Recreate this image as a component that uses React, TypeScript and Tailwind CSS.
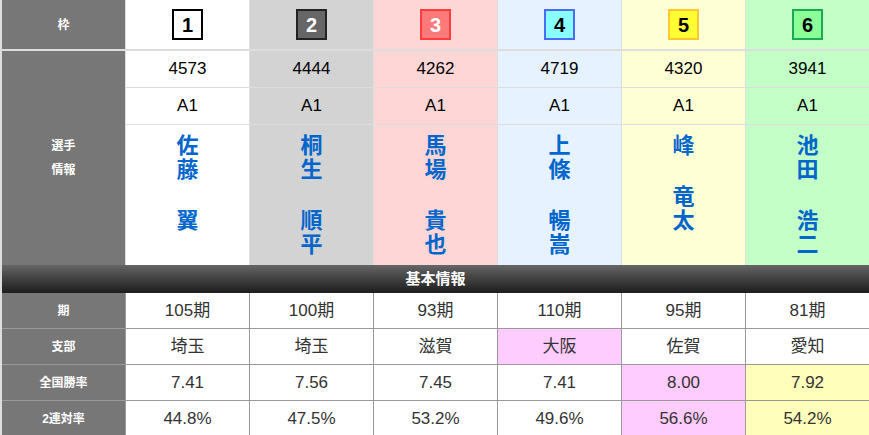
const font = "[font-family:'Liberation_Sans','Noto_Sans_CJK_JP',sans-serif]";

const racers = [
  {
    frame: "1",
    col: "bg-white",
    box: "bg-white border-black text-black",
    no: "4573",
    cls: "A1",
    name: ["佐", "藤", "　", "翼"],
    term: "105期",
    branch: "埼玉",
    rate: "7.41",
    rate2: "44.8%",
  },
  {
    frame: "2",
    col: "bg-[#d3d3d3]",
    box: "bg-[#666666] border-[#222222] text-white",
    no: "4444",
    cls: "A1",
    name: ["桐", "生", "　", "順", "平"],
    term: "100期",
    branch: "埼玉",
    rate: "7.56",
    rate2: "47.5%",
  },
  {
    frame: "3",
    col: "bg-[#ffd6d6]",
    box: "bg-[#ff7b7b] border-[#ff3b3b] text-white",
    no: "4262",
    cls: "A1",
    name: ["馬", "場", "　", "貴", "也"],
    term: "93期",
    branch: "滋賀",
    rate: "7.45",
    rate2: "53.2%",
  },
  {
    frame: "4",
    col: "bg-[#e6f2ff]",
    box: "bg-[#8affff] border-[#4a6bff] text-black",
    no: "4719",
    cls: "A1",
    name: ["上", "條", "　", "暢", "嵩"],
    term: "110期",
    branch: "大阪",
    branchHi: "bg-[#ffccff]",
    rate: "7.41",
    rate2: "49.6%",
  },
  {
    frame: "5",
    col: "bg-[#ffffd6]",
    box: "bg-[#ffff33] border-[#ffc830] text-black",
    no: "4320",
    cls: "A1",
    name: ["峰", "　", "竜", "太"],
    term: "95期",
    branch: "佐賀",
    rate: "8.00",
    rate2: "56.6%",
    rateHi: "bg-[#ffccff]",
  },
  {
    frame: "6",
    col: "bg-[#c3ffc6]",
    box: "bg-[#8cff99] border-[#1aaa55] text-black",
    no: "3941",
    cls: "A1",
    name: ["池", "田", "　", "浩", "二"],
    term: "81期",
    branch: "愛知",
    rate: "7.92",
    rate2: "54.2%",
    rateHi: "bg-[#ffffbb]",
  },
];

type Racer = (typeof racers)[number] & { branchHi?: string; rateHi?: string };

const label = "flex items-center justify-center bg-[#777777] text-[12px] font-bold text-white";
const cell = "flex items-center justify-center text-[17px] text-[#333333]";

export default function App() {
  const list = racers as Racer[];

  return (
    <div className={`w-[869px] h-[435px] overflow-hidden bg-[#dddddd] pl-[2px] ${font}`}>
      {/* TOP: racer info */}
      <div className="grid grid-cols-[123px_repeat(6,minmax(0,1fr))] grid-rows-[50px_36px_36px_140px] gap-x-px gap-y-px">
        <div className={`${label} mb-px`}>枠</div>
        {list.map((r) => (
          <div key={r.frame} className={`${r.col} mb-px flex items-center justify-center`}>
            <span
              className={`flex h-[31px] w-[31px] items-center justify-center border-2 text-[20px] font-bold leading-none ${r.box}`}
            >
              {r.frame}
            </span>
          </div>
        ))}

        <div className={`${label} row-span-3 flex-col leading-[24px]`}>
          <span>選手</span>
          <span>情報</span>
        </div>
        {list.map((r) => (
          <div key={r.no} className={`${r.col} flex items-center justify-center text-[17px] text-black`}>
            {r.no}
          </div>
        ))}
        {list.map((r) => (
          <div key={r.frame + "cls"} className={`${r.col} flex items-center justify-center text-[17px] text-black`}>
            {r.cls}
          </div>
        ))}
        {list.map((r) => (
          <div key={r.frame + "name"} className={`${r.col} flex flex-col items-center pt-[9px]`}>
            {r.name.map((c, i) =>
              c === "　" ? (
                <span key={i} className="h-[27px]" />
              ) : (
                <span key={i} className="h-[24px] text-[22px] font-bold leading-[24px] text-[#0066cc]">
                  {c}
                </span>
              )
            )}
          </div>
        ))}
      </div>

      {/* BAR */}
      <div className="flex h-[28px] items-center justify-center bg-gradient-to-b from-[#666666] to-[#1e1e1e] text-[15px] font-bold text-white">
        基本情報
      </div>

      {/* BOTTOM: stats */}
      <div className="grid grid-cols-[123px_repeat(6,minmax(0,1fr))] grid-rows-[35px_35px_35px_35px] gap-px bg-[#999999]">
        <div className={label}>期</div>
        {list.map((r) => (
          <div key={r.term} className={`${cell} bg-white`}>{r.term}</div>
        ))}
        <div className={label}>支部</div>
        {list.map((r) => (
          <div key={r.frame + "br"} className={`${cell} ${r.branchHi ?? "bg-white"}`}>{r.branch}</div>
        ))}
        <div className={label}>全国勝率</div>
        {list.map((r) => (
          <div key={r.frame + "rt"} className={`${cell} ${r.rateHi ?? "bg-white"}`}>{r.rate}</div>
        ))}
        <div className={label}>2連対率</div>
        {list.map((r) => (
          <div key={r.frame + "r2"} className={`${cell} ${r.rateHi ?? "bg-white"}`}>{r.rate2}</div>
        ))}
      </div>
    </div>
  );
}
